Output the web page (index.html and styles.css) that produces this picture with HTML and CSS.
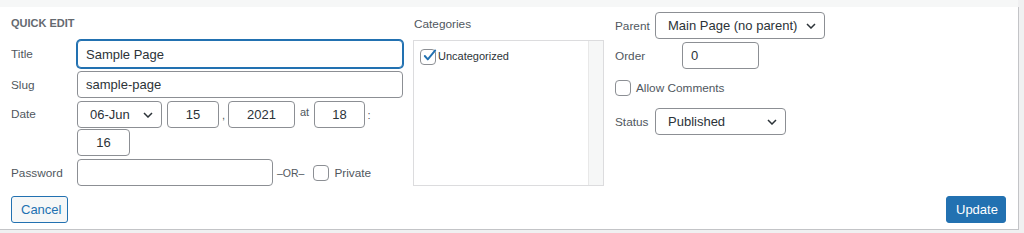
FILE: index.html
```html
<!DOCTYPE html>
<html lang="en">
  <head>
    <meta charset="UTF-8" />
    <meta name="viewport" content="width=device-width, initial-scale=1.0" />
    <title>Quick Edit</title>
    <link rel="stylesheet" href="styles.css">
  </head>
  <body>
    <div class="strip"></div>
    <div class="panel">
      <div class="columns">
        <!-- left: title, slug, date, password -->
        <div class="col-left">
          <h4 class="heading">Quick Edit</h4>
          <div class="row">
            <span class="label">Title</span>
            <input type="text" class="field focus" value="Sample Page" />
          </div>
          <div class="row">
            <span class="label">Slug</span>
            <input type="text" class="field" value="sample-page" />
          </div>
          <div class="row top">
            <span class="label date-label">Date</span>
            <div class="date">
              <div class="select-wrap w-month">
                <select class="select"><option>06-Jun</option></select>
                <svg class="chev" width="10" height="6" viewBox="0 0 10 6"><path d="M1 1l4 4 4-4" fill="none" stroke="#2c3338" stroke-width="1.5"/></svg>
              </div>
              <input type="text" class="field num w-day" value="15" />
              <span class="sep s-comma">,</span>
              <input type="text" class="field num w-year" value="2021" />
              <span class="sep s-at">at</span>
              <input type="text" class="field num w-hour" value="18" />
              <span class="sep s-colon">:</span>
              <input type="text" class="field num w-min" value="16" />
            </div>
          </div>
          <div class="row">
            <span class="label">Password</span>
            <input type="text" class="field w-pass" value="" />
            <span class="or">–OR–</span>
            <span class="check"></span>
            <span class="check-text">Private</span>
          </div>
        </div>

        <!-- middle: categories -->
        <div class="col-mid">
          <div class="cat-title">Categories</div>
          <div class="cat-box">
            <div class="cat-list">
              <div class="cat-item">
                <span class="check checked">
                  <svg width="18" height="18" viewBox="0 0 18 18"><path d="M3.8 9l3 3.4 7.4-9" fill="none" stroke="#2271b1" stroke-width="1.9" stroke-linecap="round" stroke-linejoin="round"/></svg>
                </span>
                <span class="cat-name">Uncategorized</span>
              </div>
            </div>
            <div class="cat-scroll"></div>
          </div>
        </div>

        <!-- right: parent, order, comments, status -->
        <div class="col-right">
          <div class="row">
            <span class="label w-parent">Parent</span>
            <div class="select-wrap w-parent-sel">
              <select class="select"><option>Main Page (no parent)</option></select>
              <svg class="chev" width="10" height="6" viewBox="0 0 10 6"><path d="M1 1l4 4 4-4" fill="none" stroke="#2c3338" stroke-width="1.5"/></svg>
            </div>
          </div>
          <div class="row">
            <span class="label w-order">Order</span>
            <input type="text" class="field w-order-in" value="0" />
          </div>
          <div class="row comments">
            <span class="check"></span>
            <span class="check-text">Allow Comments</span>
          </div>
          <div class="row status">
            <span class="label w-parent">Status</span>
            <div class="select-wrap w-status">
              <select class="select"><option>Published</option></select>
              <svg class="chev" width="10" height="6" viewBox="0 0 10 6"><path d="M1 1l4 4 4-4" fill="none" stroke="#2c3338" stroke-width="1.5"/></svg>
            </div>
          </div>
        </div>
      </div>

      <div class="actions">
        <button class="btn cancel">Cancel</button>
        <button class="btn update">Update</button>
      </div>
    </div>
  </body>
</html>
```

FILE: styles.css
```css
body{
  margin: 0;
  background-color: #f0f0f1;
  font-family: "Liberation Sans", Arial, sans-serif;
  color: #50575e;
}
.strip{
  height: 7px;
  width: 1018px;
  background-color: #f6f7f7;
}
/* quick edit panel */
.panel{
  box-sizing: border-box;
  width: 1019px;
  height: 223px;
  padding: 0 12px 0 11px;
  background-color: #fff;
  border-right: 1px solid #c3c4c7;
  border-bottom: 1px solid #c3c4c7;
}
.columns{
  display: flex;
  align-items: flex-start;
  height: 179px;
}
.col-left{
  width: 392px;
  padding-top: 9px;
  display: flex;
  flex-direction: column;
  gap: 3px;
}
.heading{
  margin: 0 0 6px 0;
  font-size: 11px;
  line-height: 15px;
  font-weight: 700;
  text-transform: uppercase;
  color: #646970;
}
.row{
  display: flex;
  align-items: center;
}
.row.top{
  align-items: flex-start;
}
.label{
  width: 66px;
  flex: none;
  font-size: 11.8px;
  color: #50575e;
}
.date-label{
  line-height: 27px;
}
.field{
  box-sizing: border-box;
  height: 27px;
  width: 326px;
  padding: 0 8px;
  border: 1px solid #8c8f94;
  border-radius: 4px;
  background: #fff;
  font-family: inherit;
  font-size: 13px;
  color: #2c3338;
  outline: none;
}
.field.focus{
  height: 28px;
  border-color: #2271b1;
  box-shadow: 0 0 0 1px #2271b1;
}
.field.num{
  text-align: center;
}
/* date fields */
.date{
  width: 326px;
  display: flex;
  flex-wrap: wrap;
  row-gap: 1px;
  align-items: center;
}
.select-wrap{
  position: relative;
  flex: none;
}
.select{
  box-sizing: border-box;
  width: 100%;
  height: 27px;
  padding: 0 24px 0 12px;
  border: 1px solid #8c8f94;
  border-radius: 4px;
  background: #fff;
  -webkit-appearance: none;
  appearance: none;
  font-family: inherit;
  font-size: 13px;
  color: #2c3338;
}
.chev{
  position: absolute;
  right: 9px;
  top: 11px;
}
.w-month{ width: 85px; margin-right: 5px; }
.w-day{ width: 52px; }
.w-year{ width: 67px; }
.w-hour{ width: 51px; }
.w-min{ width: 53px; }
.sep{
  font-size: 11px;
  color: #50575e;
  text-align: center;
}
.s-comma{ width: 9px; }
.s-at{ width: 19px; padding-bottom: 6px; }
.s-colon{ width: 8px; }
.w-pass{ width: 196px; }
.or{
  margin: 0 9px 0 4px;
  font-size: 10.5px;
}
/* checkboxes */
.check{
  box-sizing: border-box;
  display: inline-flex;
  align-items: center;
  justify-content: center;
  width: 16px;
  height: 16px;
  flex: none;
  border: 1px solid #8c8f94;
  border-radius: 4px;
  background: #fff;
}
.check svg{
  margin: -2px -3px 0 0;
  flex: none;
}
.check-text{
  margin-left: 5px;
  font-size: 11.8px;
  color: #50575e;
}
/* categories */
.col-mid{
  width: 191px;
  margin-left: 10px;
  padding-top: 9px;
}
.cat-title{
  margin-left: 1px;
  font-size: 11.8px;
  line-height: 16px;
}
.cat-box{
  box-sizing: border-box;
  display: flex;
  height: 146px;
  margin-top: 8px;
  border: 1px solid #dcdcde;
}
.cat-list{
  flex: 1;
  padding: 8px 0 0 6px;
}
.cat-item{
  display: flex;
  align-items: center;
}
.cat-name{
  margin-left: 2px;
  font-size: 11px;
  color: #2c3338;
  padding-bottom: 2px;
}
.cat-scroll{
  width: 14px;
  background: #f6f7f7;
  border-left: 1px solid #e8e8e8;
}
/* right column */
.col-right{
  margin-left: 11px;
  padding-top: 5px;
  display: flex;
  flex-direction: column;
  gap: 3px;
}
.w-parent{ width: 40px; }
.w-parent-sel{ width: 170px; }
.w-order{ width: 67px; }
.w-order-in{ width: 77px; }
.w-status{ width: 131px; }
.comments{
  margin-top: 8px;
  height: 16px;
}
.status{
  margin-top: 9px;
}
/* buttons */
.actions{
  display: flex;
  justify-content: space-between;
  margin-top: 10px;
}
.btn{
  height: 27px;
  padding: 0 9px;
  border-radius: 3px;
  font-family: inherit;
  font-size: 13px;
  cursor: pointer;
}
.cancel{
  width: 57px;
  background: #f6f7f7;
  border: 1px solid #2271b1;
  color: #2271b1;
}
.update{
  width: 60px;
  background: #2271b1;
  border: 1px solid #2271b1;
  color: #fff;
}
```
